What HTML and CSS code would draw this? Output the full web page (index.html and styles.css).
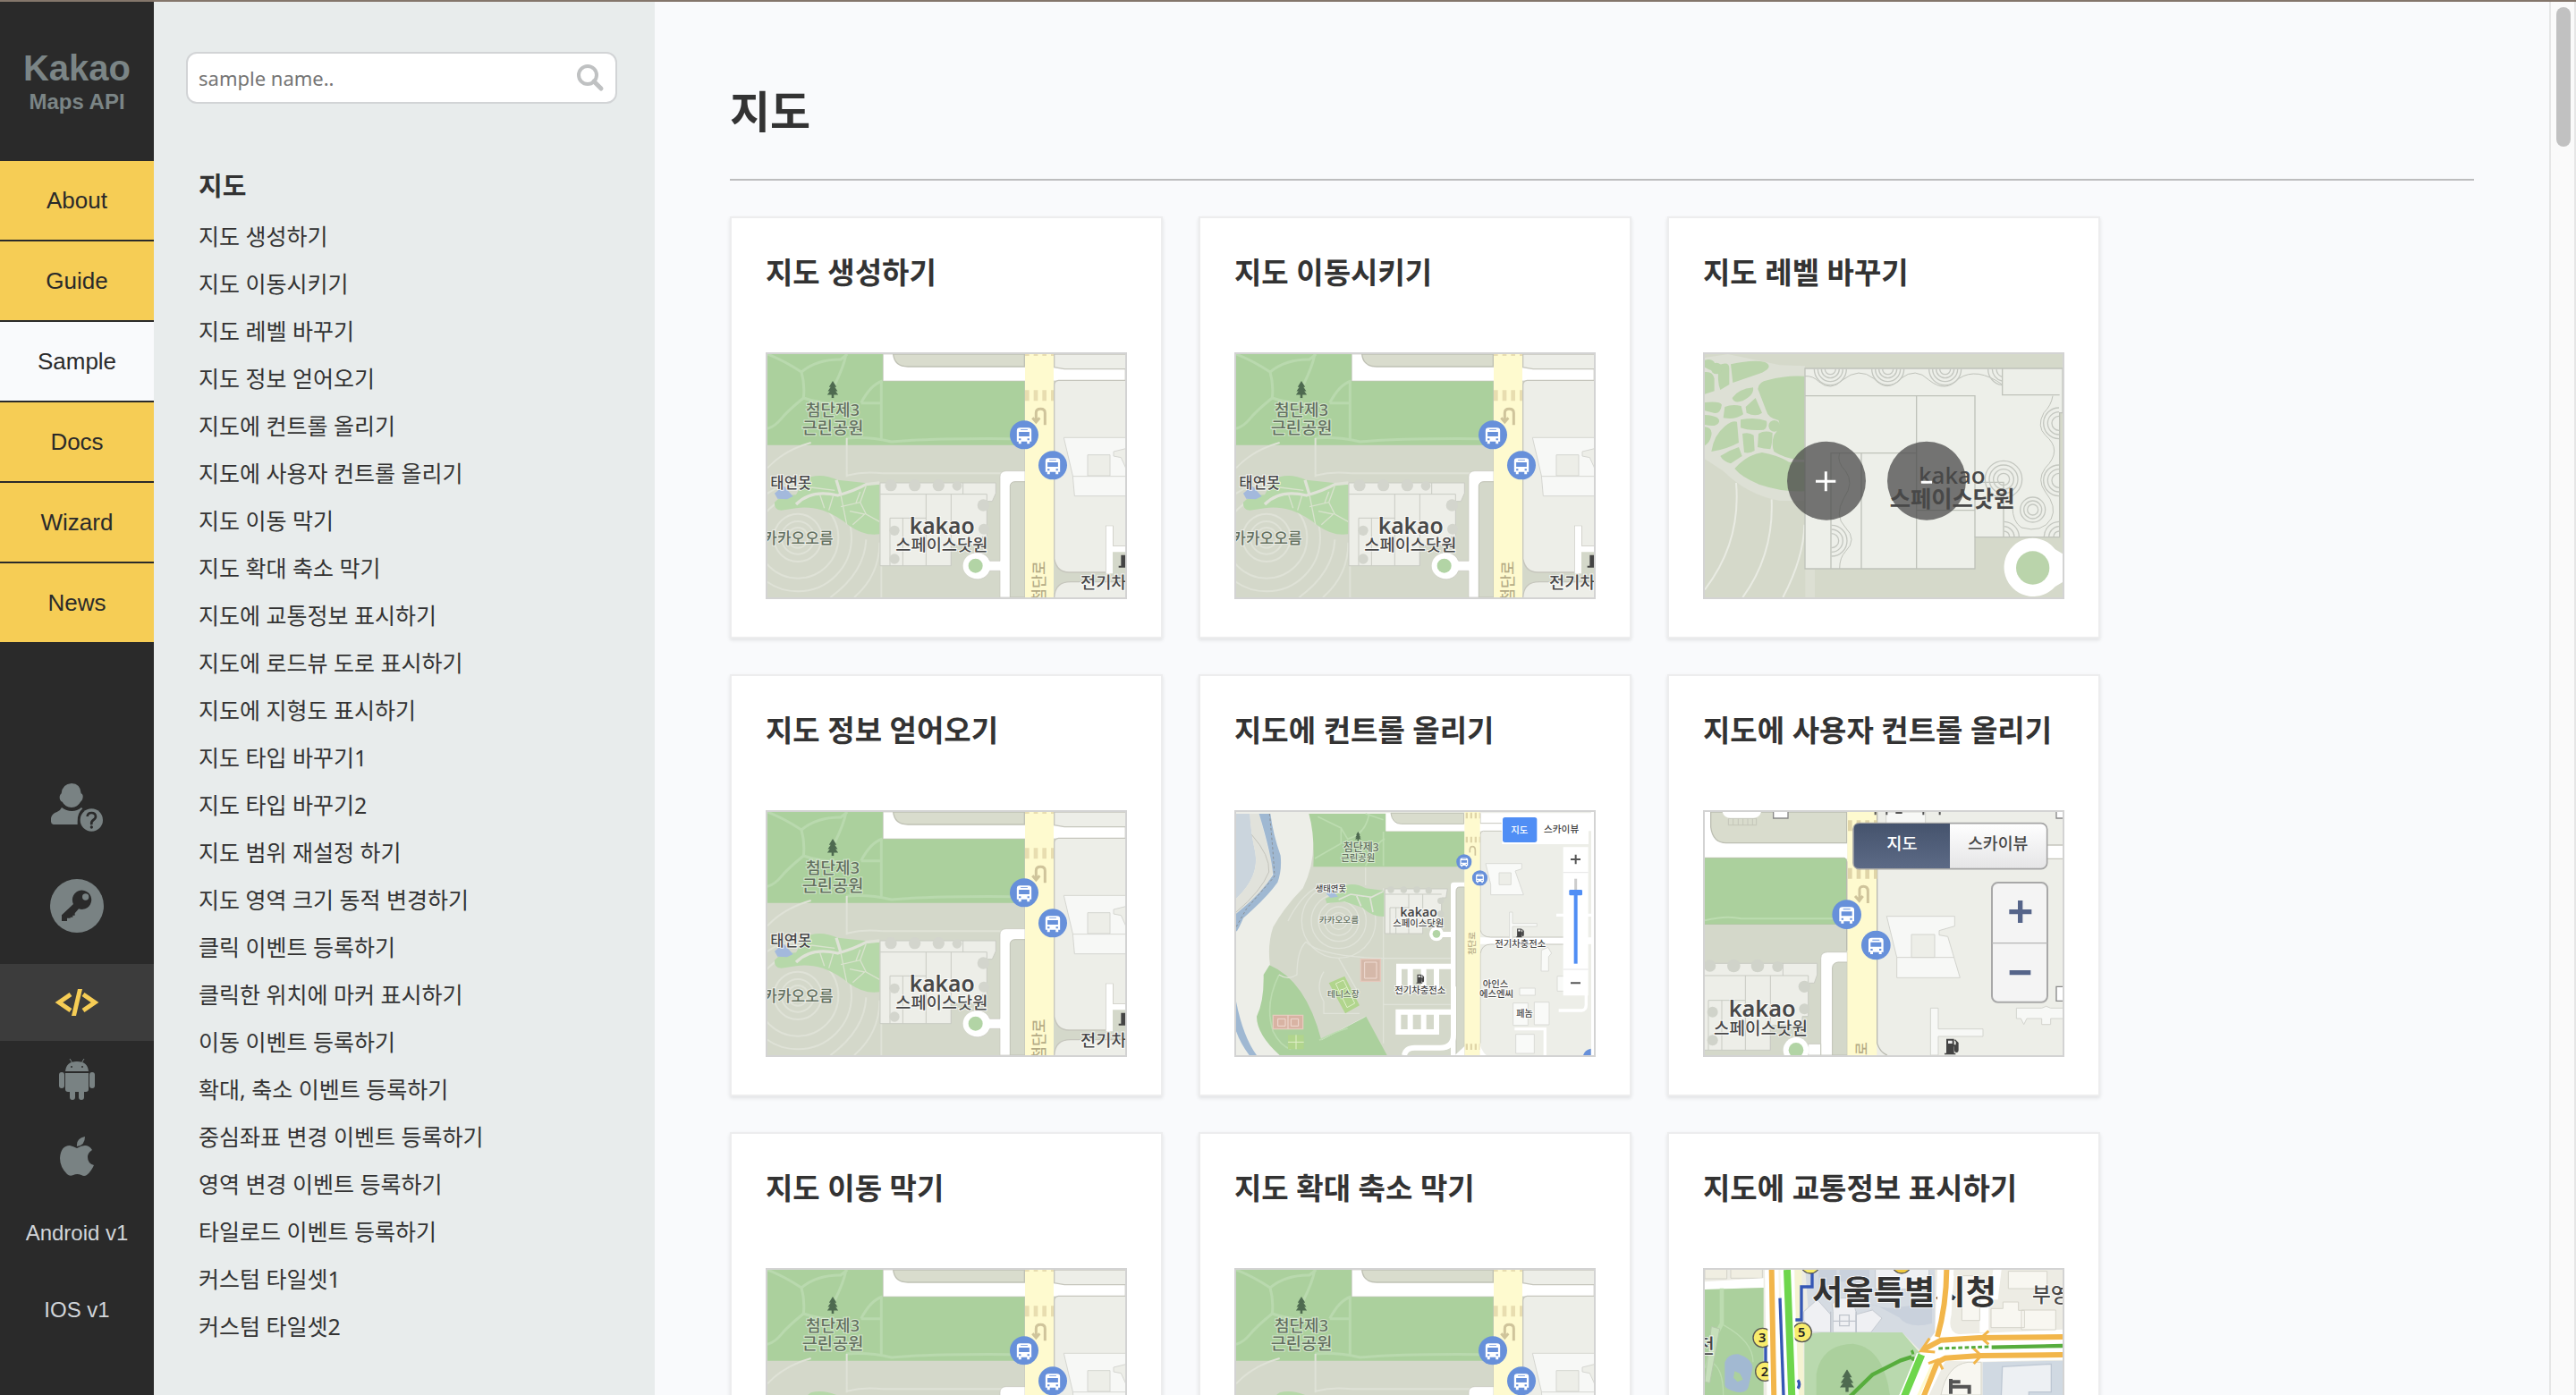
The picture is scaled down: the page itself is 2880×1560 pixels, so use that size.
FILE: index.html
```html
<!DOCTYPE html>
<html lang="ko">
<head>
<meta charset="utf-8">
<meta name="viewport" content="width=device-width, initial-scale=1">
<title>Kakao Maps API - Sample</title>
<link rel="stylesheet" href="styles.css">
</head>
<body>
<svg class="defs" aria-hidden="true">
  <defs>
    <symbol id="bus" viewBox="0 0 100 100">
      <circle cx="50" cy="50" r="49" fill="#6790da"/>
      <path fill="#fff" d="M36 25h28q11 0 11 10v38h-6v7h-9v-7H40v7h-9v-7h-6V35q0-10 11-10z"/>
      <path fill="#6790da" d="M32 40h36v15H32zM32 62h7v6h-7zM61 62h7v6h-7zM38 31h24v3H38z"/>
    </symbol>
    <symbol id="tree" viewBox="0 0 40 60">
      <path fill="#4e6a50" d="M20 0l13 21h-6l10 15h-7l9 12H24v12h-8V48H1l9-12H3l10-15H7z"/>
    </symbol>
    <symbol id="pump" viewBox="0 0 50 56">
      <path fill="#444" d="M6 2h26v20h6V12l-5-5 3-3 11 11v24q0 9-7 9t-7-9V28h-1v22h5v5H0v-5h6z"/>
      <path fill="#eee" d="M12 8h14v10H12z"/>
    </symbol>
    <g id="map-park">
      <path fill="#d4d8ca" d="M54 48h1200v816H54z"/>
      <path fill="#abd09d" d="M54 48h388v90h476v215H54z"/>
      <g fill="none" stroke="#b9d9ae" stroke-width="9">
        <path d="M54 48Q110 70 168 108Q220 65 300 66L322 48M168 108Q180 150 175 195Q120 240 100 265Q80 290 54 298M175 195Q230 215 300 215M280 150Q310 90 318 48M368 212Q400 150 440 138M436 138V335M368 212H436M318 330Q400 325 470 342Q600 330 870 332"/>
      </g>
      <g fill="none" stroke="#dfe2d7" stroke-width="6">
        <path d="M320 330V460M54 430Q110 370 200 345M320 455Q380 440 440 448H840M436 760V864"/>
        <circle cx="156" cy="664" r="34"/><circle cx="156" cy="664" r="55"/><circle cx="156" cy="664" r="80"/><circle cx="156" cy="664" r="136"/><circle cx="156" cy="664" r="180"/><path d="M385 670Q380 780 265 864M430 680Q430 790 345 864"/>
      </g>
      <path fill="#b6d8a9" d="M78 545Q100 520 150 520Q170 480 200 460Q240 448 290 470L430 485V652Q380 660 330 625Q290 590 240 572Q190 558 150 565L100 572Q75 570 78 545z"/>
      <path fill="none" stroke="#dfe2d7" stroke-width="10" d="M150 552Q200 500 290 522Q350 505 385 485L430 480M285 470L300 520"/>
      <path fill="none" stroke="#d8e2cd" stroke-width="4" d="M230 520l15 45M275 522l-15 50M300 520l20 100M300 560l65-15 20 40 45 25M365 510l-15 40M385 490l-20 55M200 495l80 10M330 575l50 10-40 35"/>
      <path fill="#a3b9dc" d="M78 515l30-25 32 35-20 10-32-2z"/>
      <g fill="#edeee8" stroke="#c9cbc3" stroke-width="3">
        <path d="M432 480H820V515L808 542H790V660H775V690H670V758H432z"/>
        <path fill="none" d="M432 518H790V542M710 480V518M586 518V758M670 518V758M465 758V598H586M508 598V758"/>
      </g>
      <g fill="#d3d5cd"><circle cx="468" cy="488" r="20"/><circle cx="548" cy="488" r="20"/><circle cx="628" cy="488" r="20"/><circle cx="690" cy="490" r="16"/><circle cx="778" cy="555" r="20"/><circle cx="780" cy="635" r="18"/><circle cx="480" cy="640" r="17"/><circle cx="480" cy="735" r="17"/></g>
      <path fill="#fff" stroke="#c6c6bd" stroke-width="2" d="M442 48H1254V138H918V864H834V775H800A45 45 0 1 1 800 742H834V460Q834 440 855 440H918V138H442z"/>
      <path fill="#d9dccd" stroke="#bfc1b4" stroke-width="4" d="M476 48Q480 90 525 90H916V48z"/>
      <path fill="#d4d8ca" stroke="#bfc1b4" stroke-width="3" d="M868 864V490Q870 476 885 476H918V864z"/>
      <path fill="#edeee8" stroke="#c6c6bd" stroke-width="4" d="M1016 48V92L1050 98H1260V48zM1260 136H1030Q1016 138 1016 152V735Q1025 780 1065 780H1190V625H1212V692H1260z"/>
      <path fill="#edeee8" stroke="#c6c6bd" stroke-width="4" d="M1016 870Q1016 812 1070 812H1260V870z"/>
      <path fill="#fff" d="M1190 625h22v67h50v20h-50v72h-22z"/>
      <path fill="#fefacf" d="M918 48h96v816h-96z"/>
      <path fill="none" stroke="#e8ddb0" stroke-width="36" stroke-dasharray="14 15" d="M918 187H1014"/>
      <path fill="none" stroke="#e8ddb0" stroke-width="8" stroke-dasharray="14 15" d="M918 50H1014"/>
      <path fill="none" stroke="#cfc49b" stroke-width="9" d="M985 286V245Q985 232 970 232T955 245V270M943 262l12 14 12-14"/>
      <circle cx="752" cy="758" r="42" fill="#fff"/><circle cx="752" cy="758" r="24" fill="#b2d4a5"/>
      <g fill="#f7f8f6" stroke="#d5d6d1" stroke-width="3"><path d="M1048 328H1256V365L1215 375V390L1240 395L1256 430V524H1084L1078 456z"/><path fill="#edeee8" d="M1128 456V386H1203V456z"/><path d="M1078 458H1256"/></g>
      <path fill="#444" d="M1240 722h14v42h-22v-6h8z"/>
    </g>
    <g id="map-bus"><use href="#bus" x="866" y="270" width="98" height="98"/><use href="#bus" x="962" y="372" width="98" height="98"/><use href="#tree" x="252" y="138" width="42" height="58"/></g>
  </defs>
</svg>

<div class="shell">
  <header class="rail">
    <a class="logo" href="#"><strong>Kakao</strong><span>Maps API</span></a>
    <nav class="menu" aria-label="Main">
      <a href="#">About</a>
      <a href="#">Guide</a>
      <a href="#" class="on" aria-current="page">Sample</a>
      <a href="#">Docs</a>
      <a href="#">Wizard</a>
      <a href="#">News</a>
    </nav>
    <nav class="tools" aria-label="Tools">
      <a class="tall" href="#" aria-label="FAQ">
        <svg width="58" height="54" viewBox="48 24 174 162"><path fill="#798283" d="M117 24Q147 25 149 58Q158 62 154 76Q152 84 147 86Q138 103 117 105Q95 103 86 86Q76 82 77 68Q78 62 83 58Q86 26 117 24zM84 105Q100 117 118 117T150 105L154 109Q136 124 137 152V162H56Q48 160 48 152V140Q52 125 68 120Q80 115 84 105z"/><circle cx="184" cy="147" r="38" fill="#798283"/><path fill="none" stroke="#2a2a2a" stroke-width="8" d="M170 135Q171 123 184 123T198 135Q198 142 190 147T184 163"/><circle cx="184" cy="171" r="5" fill="#2a2a2a"/></svg>
      </a>
      <a class="tall" href="#" aria-label="Key">
        <svg width="60" height="60" viewBox="48 342 180 180"><circle cx="138" cy="432" r="90" fill="#798283"/><path fill="#2a2a2a" d="M126 426A32 32 0 1 1 144 442L131 457V464H124V470H116V473H105V483H87V463z"/><circle cx="167" cy="402" r="11" fill="#798283"/></svg>
      </a>
      <a class="on" href="#" aria-label="Web">
        <svg width="50" height="32" viewBox="0 0 50 32"><path fill="none" stroke="#f6cd55" stroke-width="5" d="M18 7L5 16L18 25M32 7L45 16L32 25"/><path fill="#f6cd55" d="M26 1h5l-7 30h-5z"/></svg>
      </a>
      <a href="#" aria-label="Android">
        <svg width="40" height="46" viewBox="0 0 40 46"><g fill="#798283"><path d="M7 14Q8 3 20 3T33 14z"/><path d="M7 16h26v18q0 3-3 3h-2v6q0 3-3 3t-3-3v-6h-4v6q0 3-3 3t-3-3v-6h-2q-3 0-3-3z"/><rect y="15" width="6" height="18" rx="3"/><rect x="34" y="15" width="6" height="18" rx="3"/></g><path stroke="#798283" d="M12 0l3 5M28 0l-3 5"/><circle cx="14" cy="9" r="1" fill="#2a2a2a"/><circle cx="26" cy="9" r="1" fill="#2a2a2a"/></svg>
      </a>
      <a href="#" aria-label="iOS">
        <svg width="38" height="44" viewBox="0 0 38 44"><path fill="#798283" d="M28 0Q28 10 19 11Q18 2 28 0zM19 13Q24 10 28 10Q33 10 36 15Q31 18 31 23Q31 30 38 32Q35 39 30 43Q27 45 24 43Q19 41 15 43Q11 45 8 42Q0 34 0 24Q1 10 11 10Q15 11 19 13z"/></svg>
      </a>
      <a href="#">Android v1</a>
      <a href="#">IOS v1</a>
    </nav>
  </header>

  <aside class="panel">
    <form class="search" role="search">
      <input type="text" placeholder="sample name.." aria-label="sample name">
      <button type="button" aria-label="Search"><svg width="32" height="32" viewBox="0 0 32 32"><circle cx="13" cy="13" r="10" fill="none" stroke="#bfc1c2" stroke-width="4"/><path stroke="#bfc1c2" stroke-width="5" stroke-linecap="round" d="M20 20l8 8"/></svg></button>
    </form>
    <h2>지도</h2>
    <ul>
      <li><a href="#">지도 생성하기</a></li>
      <li><a href="#">지도 이동시키기</a></li>
      <li><a href="#">지도 레벨 바꾸기</a></li>
      <li><a href="#">지도 정보 얻어오기</a></li>
      <li><a href="#">지도에 컨트롤 올리기</a></li>
      <li><a href="#">지도에 사용자 컨트롤 올리기</a></li>
      <li><a href="#">지도 이동 막기</a></li>
      <li><a href="#">지도 확대 축소 막기</a></li>
      <li><a href="#">지도에 교통정보 표시하기</a></li>
      <li><a href="#">지도에 로드뷰 도로 표시하기</a></li>
      <li><a href="#">지도에 지형도 표시하기</a></li>
      <li><a href="#">지도 타입 바꾸기1</a></li>
      <li><a href="#">지도 타입 바꾸기2</a></li>
      <li><a href="#">지도 범위 재설정 하기</a></li>
      <li><a href="#">지도 영역 크기 동적 변경하기</a></li>
      <li><a href="#">클릭 이벤트 등록하기</a></li>
      <li><a href="#">클릭한 위치에 마커 표시하기</a></li>
      <li><a href="#">이동 이벤트 등록하기</a></li>
      <li><a href="#">확대, 축소 이벤트 등록하기</a></li>
      <li><a href="#">중심좌표 변경 이벤트 등록하기</a></li>
      <li><a href="#">영역 변경 이벤트 등록하기</a></li>
      <li><a href="#">타일로드 이벤트 등록하기</a></li>
      <li><a href="#">커스텀 타일셋1</a></li>
      <li><a href="#">커스텀 타일셋2</a></li>
    </ul>
  </aside>

  <main class="content">
    <h1>지도</h1>
    <div class="cards">
      <a class="card" href="#">
        <h3>지도 생성하기</h3>
        <svg class="thumb" viewBox="54 48 1200 816"><use href="#map-park"/>
          <g class="label"><text class="soft" x="183" y="254" font-size="54">첨단제3</text><text class="soft" x="170" y="316" font-size="56">근린공원</text><text x="64" y="497" font-size="50">태연못</text><text class="soft" x="40" y="685" font-size="51">카카오오름</text><text class="brand" x="530" y="652" font-size="74">kakao</text><text x="484" y="708" font-size="56">스페이스닷원</text><text x="1104" y="835" font-size="56">전기차충</text><text class="road" transform="translate(984 864) rotate(-90)" x="-16" y="0" font-size="50">첨단로</text></g>
          <use href="#map-bus"/></svg>
      </a>
      <a class="card" href="#">
        <h3>지도 이동시키기</h3>
        <svg class="thumb" viewBox="54 48 1200 816"><use href="#map-park"/>
          <g class="label"><text class="soft" x="183" y="254" font-size="54">첨단제3</text><text class="soft" x="170" y="316" font-size="56">근린공원</text><text x="64" y="497" font-size="50">태연못</text><text class="soft" x="40" y="685" font-size="51">카카오오름</text><text class="brand" x="530" y="652" font-size="74">kakao</text><text x="484" y="708" font-size="56">스페이스닷원</text><text x="1104" y="835" font-size="56">전기차충</text><text class="road" transform="translate(984 864) rotate(-90)" x="-16" y="0" font-size="50">첨단로</text></g>
          <use href="#map-bus"/></svg>
      </a>
      <a class="card" href="#">
        <h3>지도 레벨 바꾸기</h3>
        <svg class="thumb" viewBox="78 48 1200 816">
          <path fill="#d5d9ca" d="M78 48h1200v816H78z"/>
          <path fill="#dde0d5" d="M78 60L155 48L330 85L414 88V540H330Q220 520 140 440L78 400z"/>
          <g fill="#bad4ab">
            <path d="M78 68Q100 62 110 75Q125 120 78 92zM78 108Q105 105 110 130V172L78 182zM125 85Q160 70 160 95V150L130 168Q118 140 125 85zM165 82Q240 65 280 75Q310 90 270 110L172 144zM170 195Q190 165 240 160Q245 185 205 205Q175 215 170 195z"/>
            <path d="M256 165Q258 140 290 135Q350 118 412 122V402Q360 405 310 375Q300 350 310 320Q335 290 325 270Q290 262 285 240z"/>
            <path d="M178 432Q220 385 270 378Q330 390 360 410H414V508Q340 512 260 485Q200 460 178 432z"/>
            <path d="M78 210Q130 205 135 218Q130 250 108 245L78 238zM78 252Q130 255 126 275Q118 295 78 285zM78 292Q105 295 100 320Q95 345 78 355zM145 225Q170 215 200 222L207 250Q180 270 140 262zM215 225L248 195L270 245Q250 260 218 245zM100 375Q108 320 145 290Q170 270 186 275L192 345Q150 368 100 375zM198 268Q250 258 285 272Q290 295 275 302Q220 305 198 295zM204 315Q225 308 242 320L245 372Q230 382 210 378zM258 315Q280 302 305 312Q305 345 298 367Q275 365 255 360zM130 390Q160 370 192 360L203 390L165 415Q140 408 130 390z"/>
            <circle cx="311" cy="289" r="19"/><circle cx="117" cy="96" r="19"/>
          </g>
          <path fill="none" stroke="#e9ebe3" stroke-width="6" d="M183 480Q200 680 78 838M302 535Q310 720 205 864M412 620Q410 730 340 864"/>
          <path fill="#dcdfd3" d="M415 770h32v94h-32z"/>
          <g fill="#edefe9" stroke="#bfc2ba" stroke-width="4">
            <path d="M414 96H1278V245H1268V662H984V768H414z"/>
            <path fill="none" d="M1076 96V185H1268M414 188H984V662M788 188V768M501 768V380H788M603 380V768M788 572H984M984 478H1080V662"/>
            <path fill="none" stroke-width="3" d="M414 122Q440 120 460 140Q500 175 540 135Q595 90 645 130Q690 180 735 130Q785 90 830 135Q885 180 930 130Q990 90 1076 150M530 380Q520 410 550 440Q580 480 545 530Q510 590 550 630Q590 670 550 710Q530 730 530 768M1245 188Q1240 220 1215 245Q1190 290 1220 320Q1280 370 1220 430Q1190 470 1220 510Q1260 560 1240 600Q1210 650 1140 630Q1110 610 1110 560"/>
          </g>
          <g fill="none" stroke="#c4c7c0" stroke-width="4">
            <path d="M445 98a54 54 0 0 0 108 0M457 98a42 42 0 0 0 84 0M469 98a30 30 0 0 0 60 0M481 98a18 18 0 0 0 36 0M638 98a54 54 0 0 0 108 0M650 98a42 42 0 0 0 84 0M662 98a30 30 0 0 0 60 0M674 98a18 18 0 0 0 36 0M830 98a54 54 0 0 0 108 0M842 98a42 42 0 0 0 84 0M854 98a30 30 0 0 0 60 0M866 98a18 18 0 0 0 36 0M1028 98a54 54 0 0 0 46 54M1042 98a42 42 0 0 0 32 40M1056 98a30 30 0 0 0 18 26"/>
            <path d="M1266 228a52 52 0 0 0 0 104M1266 242a38 38 0 0 0 0 76M1266 256a24 24 0 0 0 0 48M1266 420a52 52 0 0 0 0 104M1266 434a38 38 0 0 0 0 76M1266 448a24 24 0 0 0 0 48M503 622a52 52 0 0 1 0 104M503 636a38 38 0 0 1 0 76M503 650a24 24 0 0 1 0 48"/>
            <path d="M1082 610a52 52 0 0 1 50 50M1082 626a36 36 0 0 1 34 34M1082 642a20 20 0 0 1 18 18M1266 610a52 52 0 0 0-50 50M1266 626a36 36 0 0 0-34 34M1266 642a20 20 0 0 0-18 18"/>
            <circle cx="1080" cy="468" r="62"/><circle cx="1080" cy="468" r="48"/><circle cx="1080" cy="468" r="34"/><circle cx="1080" cy="468" r="20"/>
            <circle cx="1178" cy="570" r="42"/><circle cx="1178" cy="570" r="30"/><circle cx="1178" cy="570" r="18"/>
          </g>
          <path fill="#fff" d="M1178 665a98 98 0 0 1 75 38l25 15v95l-25 15a98 98 0 1 1-75-163z"/><circle cx="1178" cy="765" r="56" fill="#bad4ab"/>
          <g fill="#4a4a4a" fill-opacity=".75"><circle cx="486" cy="473" r="132"/><circle cx="822" cy="473" r="132"/></g>
          <g class="label bare"><text x="795" y="484" font-size="78">kakao</text><text class="bold" x="698" y="560" font-size="76">스페이스닷원</text></g>
          <path fill="none" stroke="#fff" stroke-width="9" d="M450 475h67M484 442v66M803 478h37"/>
        </svg>
      </a>
      <a class="card" href="#">
        <h3>지도 정보 얻어오기</h3>
        <svg class="thumb" viewBox="54 48 1200 816"><use href="#map-park"/>
          <g class="label"><text class="soft" x="183" y="254" font-size="54">첨단제3</text><text class="soft" x="170" y="316" font-size="56">근린공원</text><text x="64" y="497" font-size="50">태연못</text><text class="soft" x="40" y="685" font-size="51">카카오오름</text><text class="brand" x="530" y="652" font-size="74">kakao</text><text x="484" y="708" font-size="56">스페이스닷원</text><text x="1104" y="835" font-size="56">전기차충</text><text class="road" transform="translate(984 864) rotate(-90)" x="-16" y="0" font-size="50">첨단로</text></g>
          <use href="#map-bus"/></svg>
      </a>
      <a class="card" href="#">
        <h3>지도에 컨트롤 올리기</h3>
        <svg class="thumb" viewBox="66 54 1200 816">
          <path fill="#edeee8" d="M66 54h1200v816H66z"/>
          <path fill="#cbd5dd" d="M66 60h46Q115 120 130 190Q145 270 66 345z"/>
          <path fill="#e1e2db" d="M112 60h32Q160 130 180 200L190 255Q170 320 66 400V345Q145 270 130 190Q115 120 112 60z"/>
          <path fill="none" stroke="#c3c3bb" stroke-width="3" d="M118 130Q180 200 176 255Q150 320 66 390"/>
          <path fill="#9fb8d2" d="M143 60h38Q190 130 215 200Q220 250 205 290Q170 340 90 410Q60 480 66 440V395Q150 330 190 265Q185 200 143 60zM66 690Q90 810 135 870H110Q80 830 66 790z"/>
          <path fill="none" stroke="#8a8f92" stroke-width="3" stroke-dasharray="8 8" d="M178 60Q190 180 195 270L100 380L66 440"/>
          <path fill="#d4d8ca" d="M325 60H832V870H570L500 740L350 820L180 570Q170 500 190 440Q230 370 290 310Q325 240 325 160z"/>
          <path fill="#abd09d" d="M310 60h258v60h264v118H325Q330 130 310 60zM178 568Q300 620 352 820L502 740L572 870H212Q135 800 135 740Q160 690 158 600z"/>
          <path fill="none" stroke="#bcdcb0" stroke-width="5" d="M340 70L418 108L440 145Q500 130 512 60M418 108V160L330 210M500 60L560 80M560 120V235M500 235Q540 150 565 145M210 600Q160 700 190 790Q215 840 250 850M345 820Q400 790 440 780"/>
          <g fill="none" stroke="#e0e3d9" stroke-width="4"><circle cx="410" cy="420" r="28"/><circle cx="410" cy="420" r="48"/><circle cx="410" cy="420" r="68"/><circle cx="410" cy="420" r="92"/><circle cx="410" cy="420" r="124"/><path d="M500 240V300M330 310Q280 340 240 420M300 490Q270 520 270 600Q240 620 210 600M300 490Q350 540 560 545M410 545L470 650M360 590Q330 640 360 690V730H480M560 310V830M560 545H785M560 700H785"/></g>
          <path fill="#b4d8a8" d="M365 345L410 325L430 300Q470 290 500 310L562 318V405Q520 405 490 375Q460 365 430 355L370 360z"/>
          <path fill="none" stroke="#dfe2d7" stroke-width="5" d="M410 348L450 330L520 340L560 320M470 335l15 35M515 340l10 50"/>
          <path fill="#a6bddc" d="M368 328l20-12 20 22-25 4z"/>
          <g fill="#edeee8" stroke="#c9cbc3" stroke-width="3"><path d="M565 312H775L770 342H755V420H692V462H565z"/><path fill="none" d="M645 330V462M692 330V420M582 462V375H645M602 375V462M565 330H755"/></g>
          <g fill="#d0d3ca"><circle cx="585" cy="315" r="11"/><circle cx="628" cy="315" r="11"/><circle cx="672" cy="315" r="11"/><circle cx="712" cy="317" r="11"/><circle cx="752" cy="352" r="11"/><circle cx="752" cy="396" r="11"/></g>
          <path fill="#fff" d="M568 58H1266V118H568zM786 870V300Q786 290 796 290H832V870zM885 475H1258V497H885z"/>
          <path fill="#d9dccd" stroke="#bfc1b4" stroke-width="3" d="M585 58Q590 94 620 94H830V58z"/>
          <path fill="#d4d8ca" stroke="#bfc1b4" stroke-width="3" d="M804 870V320Q804 306 816 306H832V870z"/>
          <path fill="none" stroke="#fff" stroke-width="18" d="M795 465H740M795 572H612V662M795 725H610V792H738V725M738 572V655M695 572V662M650 572V662M650 725V792M695 725V792M795 640V800Q795 845 750 845H665Q635 845 630 870"/>
          <circle cx="738" cy="463" r="24" fill="#fff"/><circle cx="738" cy="463" r="13" fill="#b2d4a5"/>
          <path fill="none" stroke="#c6c6bd" stroke-width="3" d="M885 58V92H956M956 118H895Q885 118 885 130V450Q890 474 920 474H1165M885 830V530Q890 498 920 498H1165"/>
          <path fill="#fefacf" d="M832 54h52v816h-52z"/>
          <path fill="none" stroke="#e0d5a8" stroke-width="20" stroke-dasharray="7 8" d="M836 66H884M836 147H884M836 842H884"/>
          <path fill="none" stroke="#cfc49b" stroke-width="5" d="M868 200V182Q868 170 858 170T850 190"/>
          <path fill="#fff" d="M884 812V870H905Q885 850 884 830zM832 840L800 870H832z"/>
          <g fill="#f9faf8" stroke="#dadbd6" stroke-width="3"><path d="M903 227H1024V245L1002 252L1030 332H920V298z"/><path fill="#edeee8" d="M948 298V258H988V298z"/><path d="M983 390h10v38h82v10h-82v48h-10zM1090 518l22-10 12 20-10 12v48h-25zM1017 645h52v24h-52zM995 695h50v75h-50zM1066 692h50v76h-50zM1004 800h62v64h-62zM1143 605h100v50h-100z"/></g>
          <path fill="none" stroke="#fff" stroke-width="10" d="M1148 720H1225Q1240 720 1240 700V640M1000 782H1102V870M1140 400H1260"/>
          <g fill="#dcb8aa" stroke="#e6c9bd" stroke-width="4"><path fill="#d5b8a9" d="M484 548h66v74h-66z"/><path fill="#d8b3a3" d="M190 736h100v46H190z"/></g>
          <path fill="none" stroke="#f0dcd3" stroke-width="3" d="M497 558h40v54h-40zM206 748h25v24h-25zM250 748h25v24h-25zM240 736v46"/>
          <path fill="#b1d58d" d="M377 628L430 605L480 703L432 730zM240 802h53v48h-53z"/><path fill="none" stroke="#e1efca" stroke-width="3" d="M400 630l26-12 38 78-26 14zM412 655l25-12M267 802v48M240 826h53"/>
          <g class="label"><text class="soft" x="425" y="185" font-size="36">첨단제3</text><text class="soft" x="418" y="220" font-size="31">근린공원</text><text x="332" y="321" font-size="28">생태연못</text><text class="soft" x="344" y="425" font-size="29">카카오오름</text><text class="brand" x="616" y="406" font-size="42">kakao</text><text x="592" y="438" font-size="31">스페이스닷원</text><text x="934" y="507" font-size="31">전기차충전소</text><text x="598" y="664" font-size="31">전기차충전소</text><text class="soft" x="372" y="675" font-size="29">테니스장</text><text x="893" y="641" font-size="31">아인스</text><text x="882" y="676" font-size="31">에스엔씨</text><text x="1006" y="741" font-size="30">페놈</text><text class="road" transform="translate(868 534) rotate(-90)" font-size="28">첨단로</text></g>
          <use href="#pump" x="1005" y="444" width="28" height="32"/><use href="#pump" x="670" y="598" width="28" height="32"/>
          <use href="#tree" x="464" y="120" width="22" height="32"/><use href="#bus" x="804" y="195" width="53" height="53"/><use href="#bus" x="857" y="249" width="53" height="53"/>
          <path fill="#6790da" d="M1230 870Q1235 852 1256 848V870z"/>
          <path fill="#fff" d="M958 66h290v96H958zM1163 172h84v498h-84z"/>
          <rect x="960" y="72" width="115" height="84" rx="8" fill="#508ef5"/>
          <g class="label bare"><text class="white" x="988" y="126" font-size="31">지도</text><text x="1098" y="124" font-size="32">스카이뷰</text></g>
          <path fill="none" stroke="#555" stroke-width="6" d="M1188 213h33M1205 197v32M1188 628h33"/>
          <path stroke="#e6e6e6" stroke-width="3" d="M1163 257h84M1163 582h84"/>
          <path stroke="#ccc" stroke-width="9" d="M1205 278v45"/><path stroke="#508ef5" stroke-width="12" d="M1205 325V563"/><rect x="1183" y="315" width="44" height="19" rx="4" fill="#508ef5"/>
          <path fill="#fff" d="M1257 54h9v816h-9z"/>
        </svg>
      </a>
      <a class="card" href="#">
        <h3>지도에 사용자 컨트롤 올리기</h3>
        <svg class="thumb" viewBox="78 54 1200 816">
          <defs><linearGradient id="navy" x2="0" y2="1"><stop stop-color="#45536d"/><stop offset="1" stop-color="#5c6a86"/></linearGradient><linearGradient id="pale" x2="0" y2="1"><stop stop-color="#fff"/><stop offset="1" stop-color="#e5e5e6"/></linearGradient></defs>
          <path fill="#edeee8" d="M78 54h1200v816H78z"/>
          <path fill="#fff" d="M78 54h478v155H78zM656 165h622v46H656z"/>
          <path fill="none" stroke="#c6c6bd" stroke-width="4" d="M1225 165h60M1225 211h60"/>
          <path fill="#d9dccd" stroke="#bcbeb2" stroke-width="4" d="M98 54V105Q105 158 150 158H554V54z"/>
          <path fill="#fff" d="M137 54h130q-5 20-30 22h-70q-25-2-30-22z"/><path fill="none" stroke="#c4c6ba" stroke-width="3" d="M157 76h94v22h-94zM173 76v22M190 76v22M206 76v22M222 76v22M238 76v22"/>
          <path fill="#fff" stroke="#888" stroke-width="4" d="M308 50h49v25h-49zM1257 50h30v25h-30zM1257 640h30v48h-30z"/>
          <path fill="#abd09d" stroke="#b6c2a8" stroke-width="3" d="M70 208H545Q555 210 555 225V432H70z"/>
          <path fill="none" stroke="#bcdcb0" stroke-width="6" d="M78 418Q150 400 200 412H520"/>
          <path fill="#d4d8ca" d="M78 432h478v438H78z"/>
          <g fill="#edeee8" stroke="#c9cbc3" stroke-width="3"><path d="M70 562H455V600L445 628H425V740H405V770H298V853H70z"/><path fill="none" d="M70 603H425V628M340 562V603M214 603V853M298 603V853M90 853V686H214M135 686V853"/></g>
          <g fill="#d0d3ca"><circle cx="95" cy="570" r="20"/><circle cx="175" cy="570" r="22"/><circle cx="255" cy="570" r="22"/><circle cx="322" cy="573" r="18"/><circle cx="412" cy="640" r="20"/><circle cx="412" cy="715" r="18"/><circle cx="104" cy="725" r="18"/><circle cx="104" cy="820" r="18"/></g>
          <path fill="#fff" stroke="#c9cbc0" stroke-width="3" d="M467 870V545Q467 524 490 524H556V870zM467 832H425V870H467z"/>
          <path fill="#d4d8ca" stroke="#bfc1b4" stroke-width="3" d="M506 870V575Q508 560 525 558H556V870z"/>
          <path fill="#fefacf" d="M556 54h99v816h-99z"/><path fill="none" stroke="#b9bab0" stroke-width="4" d="M656 54V830Q665 860 690 870M554 220V520"/>
          <path fill="none" stroke="#e0d5a8" stroke-width="36" stroke-dasharray="14 15" d="M558 260H656M558 100H656"/>
          <path fill="none" stroke="#cfc49b" stroke-width="9" d="M625 360V320Q625 304 610 304T597 320V345M582 336l14 16 12-16"/>
          <g fill="#f7f8f6" stroke="#d3d4ce" stroke-width="3"><path d="M688 404H916V437L864 452V467L893 472L934 610H722V542z"/><path fill="#edeee8" d="M771 542V465H849V542z"/><path d="M722 542H912M835 712h26v70h150v25H861v63h-26z"/><path d="M1123 712h85l15-6 15 6h50v35h-50v20h-30v-20h-50l-10 20-10-20h-15zM686 54h132v38H686z"/></g>
          <use href="#pump" x="882" y="812" width="50" height="58"/>
          <circle cx="384" cy="853" r="43" fill="#fff"/><circle cx="384" cy="853" r="25" fill="#b2d4a5"/>
          <path stroke="#555" stroke-width="6" d="M650 54v10M688 54v10M718 57h22M811 54v10M866 54v10"/>
          <g class="label"><text class="brand" x="158" y="742" font-size="76">kakao</text><text x="108" y="800" font-size="57">스페이스닷원</text><text class="road" transform="translate(622 870) rotate(-90)" font-size="48">로</text></g>
          <use href="#bus" x="504" y="348" width="100" height="100"/><use href="#bus" x="602" y="451" width="100" height="100"/>
          <rect x="576" y="92" width="650" height="153" rx="20" fill="url(#pale)" stroke="#a5a5a5" stroke-width="5"/>
          <path fill="url(#navy)" d="M596 93H900V243H596Q578 243 578 225V112Q578 93 596 93z"/>
          <rect x="1041" y="291" width="186" height="401" rx="20" fill="#f4f4f4" stroke="#a8a8a8" stroke-width="6"/>
          <path stroke="#b5b5b5" stroke-width="4" d="M1041 494h186"/>
          <path stroke="#56658a" stroke-width="16" d="M1099 389h75M1136 351v75M1100 593h71"/>
          <g class="label bare"><text class="white" x="688" y="181" font-size="56">지도</text><text x="960" y="180" font-size="55">스카이뷰</text></g>
        </svg>
      </a>
      <a class="card" href="#">
        <h3>지도 이동 막기</h3>
        <svg class="thumb" viewBox="54 48 1200 816"><use href="#map-park"/>
          <g class="label"><text class="soft" x="183" y="254" font-size="54">첨단제3</text><text class="soft" x="170" y="316" font-size="56">근린공원</text></g>
          <use href="#map-bus"/></svg>
      </a>
      <a class="card" href="#">
        <h3>지도 확대 축소 막기</h3>
        <svg class="thumb" viewBox="54 48 1200 816"><use href="#map-park"/>
          <g class="label"><text class="soft" x="183" y="254" font-size="54">첨단제3</text><text class="soft" x="170" y="316" font-size="56">근린공원</text></g>
          <use href="#map-bus"/></svg>
      </a>
      <a class="card" href="#">
        <h3>지도에 교통정보 표시하기</h3>
        <svg class="thumb" viewBox="78 90 1200 816">
          <path fill="#edece4" d="M78 90h1200v816H78z"/>
          <path fill="#f0eee2" stroke="#d3d2c8" stroke-width="3" d="M78 80h74v40H78zM165 80h106v38H165z"/>
          <path fill="#fff" d="M78 130L275 118V150L78 156z"/>
          <path fill="#abd09d" d="M78 156L275 150V906H78z"/><path fill="none" stroke="#bcdcb0" stroke-width="14" d="M135 152V270Q100 330 85 420"/><path fill="none" stroke="#bcdcb0" stroke-width="4" d="M140 275Q240 330 240 400M100 400Q140 420 140 510"/>
          <path fill="#c6dfbb" stroke="#b3c8a9" stroke-width="3" d="M100 280L128 288L95 470L78 465z"/>
          <path fill="#a2b9d2" d="M145 400Q155 372 190 373Q240 390 238 420L225 480Q220 505 185 500Q140 490 145 470z"/><path fill="#abd09d" d="M178 430l18 8 10 20-18 8-14-14z"/>
          <path fill="#d5dbe2" d="M415 90H850V300L800 360L740 300H430z"/>
          <path fill="#c9d1dc" d="M460 90h60v50h-60zM530 90h100v40H530zM560 180Q680 230 730 215L840 200V270Q760 290 730 250Q640 200 650 210z"/>
          <path fill="#eff0f3" stroke="#c5cad1" stroke-width="3" d="M650 88H830V155H650zM410 230L455 190L500 240V300H440L410 260zM505 205L525 185H570L585 230V300H508V230zM585 240L640 225L672 252L635 300H585z"/>
          <path fill="none" stroke="#bfc4cc" stroke-width="4" d="M530 242h32v36h-32zM508 262h78M500 230v70M586 230v70"/>
          <path fill="#b9d9ae" d="M412 306L470 300H740L800 370L740 510H412z"/><path fill="#abd09d" d="M452 520V440Q470 340 575 338Q680 350 700 520z"/>
          <path fill="#f5f3d2" d="M375 90h28l8 420h-36z"/><path fill="#f8f6e9" d="M285 90h95l5 420h-100z"/>
          <path fill="#fff" d="M858 90h55L905 240Q890 300 930 306L1278 290V392L1010 398L885 395L830 510H730L800 370L850 300z"/>
          <path fill="#fff" d="M1000 190h30v110h-30zM1045 90h28l-12 100h-30z"/>
          <path fill="#fefacf" d="M790 510L840 400L855 390L800 510z"/>
          <g fill="#f8f7f1" stroke="#d5d4ca" stroke-width="3"><path d="M940 110h60v150h-60zM1096 95h130v58h-130zM1038 220h40v-22h52v28h20v58h-112zM1140 225h115v66h-115zM870 510Q890 410 960 400H1005V510z"/></g>
          <path fill="#d0d9e2" d="M1010 400L1278 395V520H1010z"/><path fill="#edf0f3" stroke="#bdc7d3" stroke-width="4" d="M1076 415L1240 406V500H1165V520H1072z"/>
          <path fill="none" stroke="#fff" stroke-width="46" d="M302 90L310 510M354 90L370 510"/>
          <path fill="none" stroke="#3557b5" stroke-width="10" d="M438 100V147H402V258H382M390 460q10 14 0 28M282 340V410"/>
          <g fill="#f8ec6c" stroke="#555" stroke-width="4"><circle cx="432" cy="70" r="32"/><circle cx="738" cy="70" r="32" fill="#f0c93f"/><circle cx="272" cy="318" r="32"/><circle cx="280" cy="431" r="32"/><circle cx="404" cy="300" r="32"/></g>
          <g class="label bare num"><text x="258" y="334" font-size="44">3</text><text x="266" y="447" font-size="44">2</text><text x="390" y="316" font-size="44">5</text></g>
          <g class="label"><text class="dark" x="438" y="206" font-size="112">서울특별시청</text><text x="1176" y="198" font-size="68">부영</text><text x="50" y="370" font-size="66">전</text></g>
          <path fill="#fff" d="M862 110h52l-10 110h-48z"/>
          <path fill="none" stroke="#fff" stroke-width="34" d="M302 90L310 510M354 90L370 510M805 375L745 520"/>
          <path fill="none" stroke="#3557b5" stroke-width="10" d="M330 185L342 510"/>
          <path fill="none" stroke="#f2b64b" stroke-width="18" d="M302 90L310 520M889 90Q888 210 858 315M1278 315L1000 318L870 326L810 358M1278 375L1000 378L885 386L858 400L810 520"/>
          <path fill="none" stroke="#f2b64b" stroke-width="9" d="M1030 295L1005 318L1030 340M978 352L1005 378L980 405M832 320L803 362L850 366M828 404L860 392L876 424"/>
          <path fill="none" stroke="#6ed64c" stroke-width="24" d="M354 90L370 520M805 375L745 520"/>
          <path fill="none" stroke="#57ad3d" stroke-width="13" d="M565 515L640 442L735 394L772 382M1040 350L1278 345"/><path fill="none" stroke="#57ad3d" stroke-width="9" stroke-dasharray="14 8" d="M772 360q10 20 0 40M862 354L1030 348"/>
          <use href="#tree" x="526" y="424" width="58" height="76"/>
          <path fill="none" stroke="#555" stroke-width="12" d="M903 456v50M903 466h32M903 482h62v24"/>
        </svg>
      </a>
    </div>
  </main>
  <div class="scroll" aria-hidden="true"><div class="grip"></div></div>
</div>
</body>
</html>
```

FILE: styles.css
```css
* { box-sizing: border-box; }

body {
  margin: 0;
  height: 100vh;
  overflow: hidden;
  border-top: 2px solid #84766b;
  background: #f9fafc;
  color: #333;
  font-family: "Noto Sans", "Noto Sans CJK KR", sans-serif;
}

h1, h2, h3, ul { margin: 0; padding: 0; }
ul { list-style: none; }
a { color: inherit; text-decoration: none; }
svg { display: block; }
.defs { position: absolute; width: 0; height: 0; }

.shell { display: flex; height: 100%; }

/* Left rail */
.rail {
  flex: 0 0 172px;
  background: #2a2a2a;
  font-family: "Liberation Sans", Arial, sans-serif;
}
.logo {
  display: flex;
  flex-direction: column;
  align-items: center;
  height: 178px;
  padding-top: 50px;
  color: #7b8586;
  font-weight: bold;
  font-size: 24px;
  line-height: 28px;
}
.logo strong { font-size: 40px; line-height: 48px; }
.menu a {
  display: flex;
  align-items: center;
  justify-content: center;
  height: 90px;
  border-bottom: 2px solid #2a2a2a;
  background: #f6cd55;
  color: #2a2a2a;
  font-size: 26px;
}
.menu .on { background: #f9fafc; }
.tools { padding-top: 128px; }
.tools a {
  display: flex;
  align-items: center;
  justify-content: center;
  height: 86px;
  color: #d2d6da;
  font-size: 24px;
}
.tools .tall { height: 110px; }
.tools .on { margin-top: 10px; background: #3c3c3c; }

/* Sample list */
.panel {
  flex: 0 0 560px;
  padding: 56px 42px 0 36px;
  background: #e8ecec;
  overflow: hidden;
}
.search {
  display: flex;
  align-items: center;
  height: 58px;
  padding: 0 12px;
  border: 2px solid #d2d4d6;
  border-radius: 12px;
  background: #fff;
}
.search input {
  flex: 1;
  min-width: 0;
  padding: 0;
  border: 0;
  outline: 0;
  background: none;
  font: 22px "Noto Sans", sans-serif;
}
.search input::placeholder { color: #757575; opacity: 1; }
.search button { padding: 0; border: 0; background: none; }
.panel h2 {
  padding: 72px 0 10px 14px;
  font-size: 29px;
  line-height: 40px;
}
.panel li {
  padding-left: 14px;
  font-size: 25px;
  line-height: 53px;
  white-space: nowrap;
}

/* Cards */
.content {
  flex: 1;
  min-width: 0;
  padding: 86px 84px 0;
  overflow: hidden;
}
h1 {
  padding-bottom: 40px;
  border-bottom: 2px solid #bdbdbe;
  font-size: 49px;
  line-height: 72px;
}
.cards {
  display: grid;
  grid-template-columns: repeat(auto-fill, 484px);
  gap: 40px;
  padding-top: 40px;
}
.card {
  padding: 37px 38px 42px;
  border: 2px solid #ededee;
  background: #fff;
  box-shadow: 0 2px 4px rgba(0, 0, 0, .1);
}
.card h3 {
  margin-bottom: 65px;
  font-size: 33px;
  line-height: 48px;
  white-space: nowrap;
}
.thumb {
  width: 100%;
  border: 2px solid #d3d3d3;
}

/* Map labels */
.label text {
  fill: #484848;
  stroke: #fff;
  stroke-opacity: .8;
  stroke-width: 6px;
  paint-order: stroke;
  font-weight: 500;
}
.label .soft { fill: #63705f; stroke-opacity: .5; }
.label .brand { font-weight: 600; }
.label .dark { fill: #333; font-weight: 700; }
.label .road { fill: #b5ab85; stroke: none; }
.label.bare text { stroke: none; }
.label .white { fill: #fff; }
.num text { fill: #222; font-weight: 600; }
.label .bold { font-weight: 700; }

/* Scroll track */
.scroll {
  flex: 0 0 30px;
  padding: 6px 4px 0 6px;
  border: solid #e6e6e6;
  border-width: 0 2px;
  background: #fafafa;
}
.grip {
  width: 16px;
  height: 156px;
  border-radius: 8px;
  background: #c1c1c1;
}
```
